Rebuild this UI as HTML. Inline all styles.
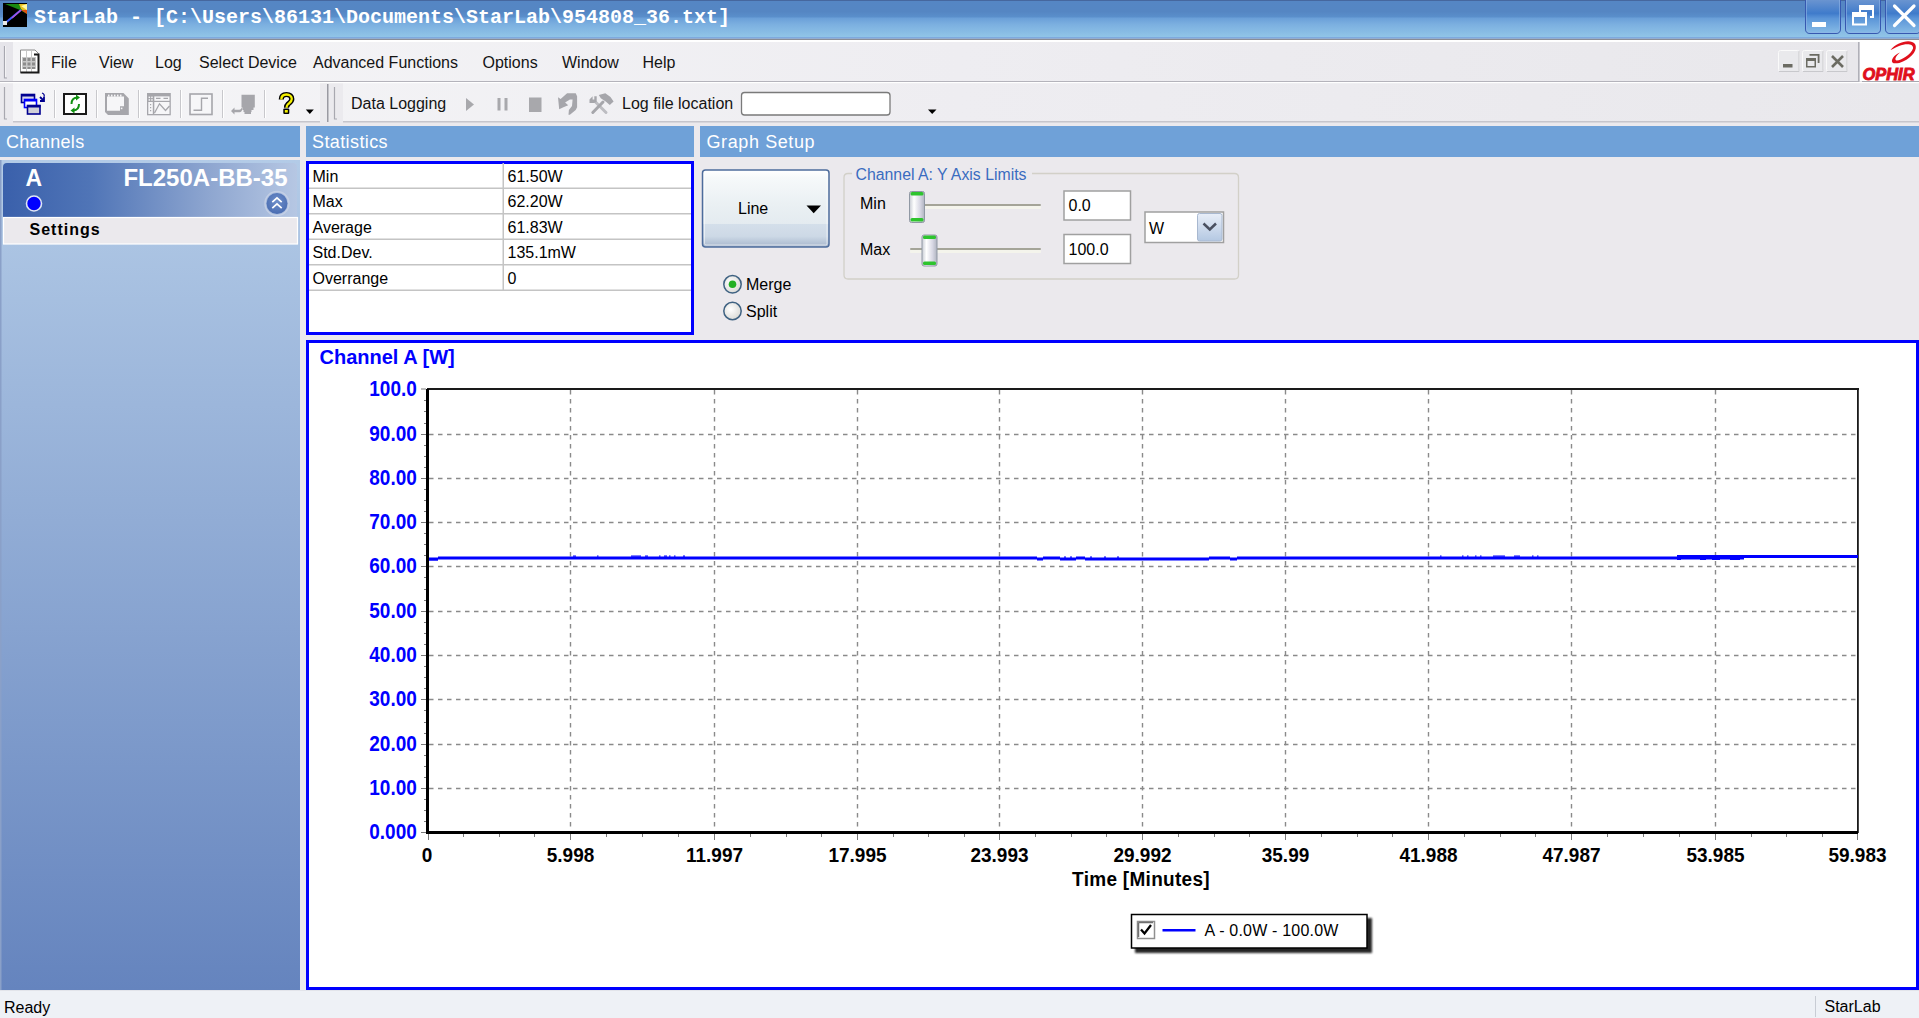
<!DOCTYPE html><html><head><meta charset="utf-8"><title>StarLab</title><style>
html,body{margin:0;padding:0;width:1919px;height:1018px;overflow:hidden;background:#ebe9ed;font-family:"Liberation Sans",sans-serif;}
svg{position:absolute;left:0;top:0;display:block;font-family:"Liberation Sans",sans-serif}
</style></head><body>
<svg width="1919" height="1018" viewBox="0 0 1919 1018">
<defs>
<linearGradient id="gTitle" x1="0" y1="0" x2="0" y2="1">
 <stop offset="0" stop-color="#5586c4"/><stop offset="0.3" stop-color="#5586c3"/><stop offset="0.45" stop-color="#5a8fcb"/>
 <stop offset="0.47" stop-color="#6a9fd8"/><stop offset="0.65" stop-color="#7cb0e0"/><stop offset="1" stop-color="#92c6e8"/>
</linearGradient>
<linearGradient id="gBtn" x1="0" y1="0" x2="0" y2="1">
 <stop offset="0" stop-color="#6a94d0"/><stop offset="0.4" stop-color="#3f7bcb"/>
 <stop offset="0.55" stop-color="#5b95d8"/><stop offset="1" stop-color="#88bce6"/>
</linearGradient>
<linearGradient id="gMenu" gradientUnits="userSpaceOnUse" x1="0" y1="0" x2="1919" y2="0">
 <stop offset="0" stop-color="#f5f5f7"/><stop offset="0.5" stop-color="#eeedf1"/><stop offset="1" stop-color="#e8e7eb"/>
</linearGradient>
<linearGradient id="gTool" gradientUnits="userSpaceOnUse" x1="0" y1="0" x2="1919" y2="0">
 <stop offset="0" stop-color="#f5f5f7"/><stop offset="0.5" stop-color="#eeedf1"/><stop offset="1" stop-color="#e9e8ec"/>
</linearGradient>
<linearGradient id="gChan" x1="0" y1="0" x2="0" y2="1">
 <stop offset="0" stop-color="#b3cbe7"/><stop offset="1" stop-color="#6584be"/>
</linearGradient>
<linearGradient id="gCard" x1="0" y1="0" x2="1" y2="0">
 <stop offset="0" stop-color="#3a60ab"/><stop offset="0.3" stop-color="#5075b7"/>
 <stop offset="0.7" stop-color="#8ea6d0"/><stop offset="1" stop-color="#b6c7e3"/>
</linearGradient>
<linearGradient id="gLineBtn" x1="0" y1="0" x2="0" y2="1">
 <stop offset="0" stop-color="#ffffff"/><stop offset="0.1" stop-color="#f6f9fa"/><stop offset="0.45" stop-color="#eaf0f3"/>
 <stop offset="0.7" stop-color="#e4ebf0"/><stop offset="0.7" stop-color="#d4dfea"/>
 <stop offset="0.86" stop-color="#cdd9e6"/><stop offset="1" stop-color="#a6b6cc"/>
</linearGradient>
<linearGradient id="gThumb" x1="0" y1="0" x2="1" y2="0">
 <stop offset="0" stop-color="#c8ccd4"/><stop offset="0.3" stop-color="#ffffff"/>
 <stop offset="0.7" stop-color="#d8d8e4"/><stop offset="1" stop-color="#b0b4c0"/>
</linearGradient>
<linearGradient id="gCombo" x1="0" y1="0" x2="0" y2="1">
 <stop offset="0" stop-color="#e8eef8"/><stop offset="1" stop-color="#b4c8e2"/>
</linearGradient>
<radialGradient id="gChev" cx="0.5" cy="0.4" r="0.6">
 <stop offset="0" stop-color="#6f8fca"/><stop offset="1" stop-color="#4a6db2"/>
</radialGradient>
<radialGradient id="gRadio" cx="0.4" cy="0.4" r="0.6">
 <stop offset="0" stop-color="#ffffff"/><stop offset="1" stop-color="#dcdcd8"/>
</radialGradient>
<filter id="fShadow" x="-10%" y="-30%" width="130%" height="180%">
 <feGaussianBlur stdDeviation="1.2"/>
</filter>
</defs>
<rect x="0" y="0" width="1919" height="1018" fill="#ebe9ed"/>
<rect x="0" y="0" width="1919" height="38" fill="url(#gTitle)"/>
<rect x="0" y="0" width="1919" height="1" fill="#46679e"/>
<rect x="0" y="37" width="1919" height="1.8" fill="#7eaadf"/>
<rect x="0" y="38.8" width="1919" height="1.4" fill="#8a8d95"/>
<rect x="0" y="40.2" width="1919" height="0.8" fill="#c4c4c8"/>
<g>
<rect x="3" y="3" width="24" height="24" fill="#000"/>
<polygon points="5,4 27,4 27,14 20,10" fill="#1a8a10"/>
<polygon points="19,4 27,4 27,13 21,9" fill="#e8c020"/>
<polygon points="21,6 27,4 27,10" fill="#fff8a0"/>
<polygon points="21,10 27,10 27,14" fill="#e05010"/>
<line x1="4" y1="24" x2="21" y2="10" stroke="#4060ff" stroke-width="2"/>
<line x1="12" y1="18" x2="21" y2="10" stroke="#b050e0" stroke-width="1.5"/>
<rect x="3" y="21" width="4" height="4" fill="#e8e8e8"/>
</g>
<text x="40" y="22.5" font-family="Liberation Mono" font-weight="bold" font-size="20" fill="#fff" text-anchor="middle">S</text>
<text x="52" y="22.5" font-family="Liberation Mono" font-weight="bold" font-size="20" fill="#fff" text-anchor="middle">t</text>
<text x="64" y="22.5" font-family="Liberation Mono" font-weight="bold" font-size="20" fill="#fff" text-anchor="middle">a</text>
<text x="76" y="22.5" font-family="Liberation Mono" font-weight="bold" font-size="20" fill="#fff" text-anchor="middle">r</text>
<text x="88" y="22.5" font-family="Liberation Mono" font-weight="bold" font-size="20" fill="#fff" text-anchor="middle">L</text>
<text x="100" y="22.5" font-family="Liberation Mono" font-weight="bold" font-size="20" fill="#fff" text-anchor="middle">a</text>
<text x="112" y="22.5" font-family="Liberation Mono" font-weight="bold" font-size="20" fill="#fff" text-anchor="middle">b</text>
<text x="136" y="22.5" font-family="Liberation Mono" font-weight="bold" font-size="20" fill="#fff" text-anchor="middle">-</text>
<text x="160" y="22.5" font-family="Liberation Mono" font-weight="bold" font-size="20" fill="#fff" text-anchor="middle">[</text>
<text x="172" y="22.5" font-family="Liberation Mono" font-weight="bold" font-size="20" fill="#fff" text-anchor="middle">C</text>
<text x="184" y="22.5" font-family="Liberation Mono" font-weight="bold" font-size="20" fill="#fff" text-anchor="middle">:</text>
<text x="196" y="22.5" font-family="Liberation Mono" font-weight="bold" font-size="20" fill="#fff" text-anchor="middle">\</text>
<text x="208" y="22.5" font-family="Liberation Mono" font-weight="bold" font-size="20" fill="#fff" text-anchor="middle">U</text>
<text x="220" y="22.5" font-family="Liberation Mono" font-weight="bold" font-size="20" fill="#fff" text-anchor="middle">s</text>
<text x="232" y="22.5" font-family="Liberation Mono" font-weight="bold" font-size="20" fill="#fff" text-anchor="middle">e</text>
<text x="244" y="22.5" font-family="Liberation Mono" font-weight="bold" font-size="20" fill="#fff" text-anchor="middle">r</text>
<text x="256" y="22.5" font-family="Liberation Mono" font-weight="bold" font-size="20" fill="#fff" text-anchor="middle">s</text>
<text x="268" y="22.5" font-family="Liberation Mono" font-weight="bold" font-size="20" fill="#fff" text-anchor="middle">\</text>
<text x="280" y="22.5" font-family="Liberation Mono" font-weight="bold" font-size="20" fill="#fff" text-anchor="middle">8</text>
<text x="292" y="22.5" font-family="Liberation Mono" font-weight="bold" font-size="20" fill="#fff" text-anchor="middle">6</text>
<text x="304" y="22.5" font-family="Liberation Mono" font-weight="bold" font-size="20" fill="#fff" text-anchor="middle">1</text>
<text x="316" y="22.5" font-family="Liberation Mono" font-weight="bold" font-size="20" fill="#fff" text-anchor="middle">3</text>
<text x="328" y="22.5" font-family="Liberation Mono" font-weight="bold" font-size="20" fill="#fff" text-anchor="middle">1</text>
<text x="340" y="22.5" font-family="Liberation Mono" font-weight="bold" font-size="20" fill="#fff" text-anchor="middle">\</text>
<text x="352" y="22.5" font-family="Liberation Mono" font-weight="bold" font-size="20" fill="#fff" text-anchor="middle">D</text>
<text x="364" y="22.5" font-family="Liberation Mono" font-weight="bold" font-size="20" fill="#fff" text-anchor="middle">o</text>
<text x="376" y="22.5" font-family="Liberation Mono" font-weight="bold" font-size="20" fill="#fff" text-anchor="middle">c</text>
<text x="388" y="22.5" font-family="Liberation Mono" font-weight="bold" font-size="20" fill="#fff" text-anchor="middle">u</text>
<text x="400" y="22.5" font-family="Liberation Mono" font-weight="bold" font-size="20" fill="#fff" text-anchor="middle">m</text>
<text x="412" y="22.5" font-family="Liberation Mono" font-weight="bold" font-size="20" fill="#fff" text-anchor="middle">e</text>
<text x="424" y="22.5" font-family="Liberation Mono" font-weight="bold" font-size="20" fill="#fff" text-anchor="middle">n</text>
<text x="436" y="22.5" font-family="Liberation Mono" font-weight="bold" font-size="20" fill="#fff" text-anchor="middle">t</text>
<text x="448" y="22.5" font-family="Liberation Mono" font-weight="bold" font-size="20" fill="#fff" text-anchor="middle">s</text>
<text x="460" y="22.5" font-family="Liberation Mono" font-weight="bold" font-size="20" fill="#fff" text-anchor="middle">\</text>
<text x="472" y="22.5" font-family="Liberation Mono" font-weight="bold" font-size="20" fill="#fff" text-anchor="middle">S</text>
<text x="484" y="22.5" font-family="Liberation Mono" font-weight="bold" font-size="20" fill="#fff" text-anchor="middle">t</text>
<text x="496" y="22.5" font-family="Liberation Mono" font-weight="bold" font-size="20" fill="#fff" text-anchor="middle">a</text>
<text x="508" y="22.5" font-family="Liberation Mono" font-weight="bold" font-size="20" fill="#fff" text-anchor="middle">r</text>
<text x="520" y="22.5" font-family="Liberation Mono" font-weight="bold" font-size="20" fill="#fff" text-anchor="middle">L</text>
<text x="532" y="22.5" font-family="Liberation Mono" font-weight="bold" font-size="20" fill="#fff" text-anchor="middle">a</text>
<text x="544" y="22.5" font-family="Liberation Mono" font-weight="bold" font-size="20" fill="#fff" text-anchor="middle">b</text>
<text x="556" y="22.5" font-family="Liberation Mono" font-weight="bold" font-size="20" fill="#fff" text-anchor="middle">\</text>
<text x="568" y="22.5" font-family="Liberation Mono" font-weight="bold" font-size="20" fill="#fff" text-anchor="middle">9</text>
<text x="580" y="22.5" font-family="Liberation Mono" font-weight="bold" font-size="20" fill="#fff" text-anchor="middle">5</text>
<text x="592" y="22.5" font-family="Liberation Mono" font-weight="bold" font-size="20" fill="#fff" text-anchor="middle">4</text>
<text x="604" y="22.5" font-family="Liberation Mono" font-weight="bold" font-size="20" fill="#fff" text-anchor="middle">8</text>
<text x="616" y="22.5" font-family="Liberation Mono" font-weight="bold" font-size="20" fill="#fff" text-anchor="middle">0</text>
<text x="628" y="22.5" font-family="Liberation Mono" font-weight="bold" font-size="20" fill="#fff" text-anchor="middle">8</text>
<text x="640" y="22.5" font-family="Liberation Mono" font-weight="bold" font-size="20" fill="#fff" text-anchor="middle">_</text>
<text x="652" y="22.5" font-family="Liberation Mono" font-weight="bold" font-size="20" fill="#fff" text-anchor="middle">3</text>
<text x="664" y="22.5" font-family="Liberation Mono" font-weight="bold" font-size="20" fill="#fff" text-anchor="middle">6</text>
<text x="676" y="22.5" font-family="Liberation Mono" font-weight="bold" font-size="20" fill="#fff" text-anchor="middle">.</text>
<text x="688" y="22.5" font-family="Liberation Mono" font-weight="bold" font-size="20" fill="#fff" text-anchor="middle">t</text>
<text x="700" y="22.5" font-family="Liberation Mono" font-weight="bold" font-size="20" fill="#fff" text-anchor="middle">x</text>
<text x="712" y="22.5" font-family="Liberation Mono" font-weight="bold" font-size="20" fill="#fff" text-anchor="middle">t</text>
<text x="724" y="22.5" font-family="Liberation Mono" font-weight="bold" font-size="20" fill="#fff" text-anchor="middle">]</text>
<path d="M1805.5,0 V29 Q1805.5,33.5 1810,33.5 H1836 Q1840.5,33.5 1840.5,29 V0" fill="url(#gBtn)" stroke="#3658b0" stroke-width="1"/>
<path d="M1806.5,0 V28.5 Q1806.5,32.5 1810,32.5 H1836 Q1839.5,32.5 1839.5,28.5 V0" fill="none" stroke="#8fb4e6" stroke-width="1" opacity="0.6"/>
<path d="M1845.5,0 V29 Q1845.5,33.5 1850,33.5 H1876 Q1880.5,33.5 1880.5,29 V0" fill="url(#gBtn)" stroke="#3658b0" stroke-width="1"/>
<path d="M1846.5,0 V28.5 Q1846.5,32.5 1850,32.5 H1876 Q1879.5,32.5 1879.5,28.5 V0" fill="none" stroke="#8fb4e6" stroke-width="1" opacity="0.6"/>
<path d="M1885.5,0 V29 Q1885.5,33.5 1890,33.5 H1916 Q1920.5,33.5 1920.5,29 V0" fill="url(#gBtn)" stroke="#3658b0" stroke-width="1"/>
<path d="M1886.5,0 V28.5 Q1886.5,32.5 1890,32.5 H1916 Q1919.5,32.5 1919.5,28.5 V0" fill="none" stroke="#8fb4e6" stroke-width="1" opacity="0.6"/>
<rect x="1812" y="22" width="14" height="5" fill="#fff"/>
<path d="M1859,5 h15 v13 h-4 v-2 h2 v-6 h-11 v2 h-2 z" fill="#fff"/>
<path d="M1852,12 h15 v13.5 h-15 z M1854,17 v6.5 h11 v-6.5 z" fill="#fff" fill-rule="evenodd"/>
<path d="M1894.5,6 L1914,25.5 M1914,6 L1894.5,25.5" stroke="#fff" stroke-width="3.2" stroke-linecap="round"/>
<rect x="0" y="40" width="1919" height="42" fill="url(#gMenu)"/>
<rect x="0" y="40" width="1919" height="2" fill="#ffffff"/>
<rect x="0" y="81" width="1859" height="1.5" fill="#b4b3bb"/>
<rect x="0" y="42" width="13" height="39" fill="#e6e5ea"/>
<path d="M4.5,46 V78 H7" stroke="#a8a8b0" fill="none" stroke-width="1.2"/>
<path d="M5.5,46 V77" stroke="#ffffff" fill="none" stroke-width="1" opacity="0.6"/>
<g>
<path d="M20.5,50 H35 L38.5,53.5 V72.5 H20.5 Z" fill="#fff" stroke="#8a8a8a" stroke-width="1"/>
<rect x="22" y="57" width="14" height="12" fill="#c8c8c8"/>
<g fill="#8c8c8c"><rect x="23" y="58" width="3" height="3"/><rect x="27.5" y="58" width="3" height="3"/><rect x="32" y="58" width="3" height="3"/>
<rect x="23" y="62.5" width="3" height="3"/><rect x="27.5" y="62.5" width="3" height="3"/><rect x="32" y="62.5" width="3" height="3"/>
<rect x="23" y="67" width="3" height="2" /><rect x="27.5" y="67" width="3" height="2"/><rect x="32" y="67" width="3" height="2"/></g>
<g fill="#c8c8c8"><rect x="26" y="51" width="1" height="21"/><rect x="31" y="51" width="1" height="21"/></g>
<path d="M20.5,72.5 H38.5 V54.5 H34" stroke="#1a1a1a" stroke-width="2" fill="none"/>
</g>
<text x="51" y="67.5" font-size="16" fill="#141414">File</text>
<text x="99" y="67.5" font-size="16" fill="#141414">View</text>
<text x="155" y="67.5" font-size="16" fill="#141414">Log</text>
<text x="199" y="67.5" font-size="16" fill="#141414">Select Device</text>
<text x="313" y="67.5" font-size="16" fill="#141414">Advanced Functions</text>
<text x="482.5" y="67.5" font-size="16" fill="#141414">Options</text>
<text x="562" y="67.5" font-size="16" fill="#141414">Window</text>
<text x="642.5" y="67.5" font-size="16" fill="#141414">Help</text>
<rect x="1778.5" y="50.5" width="21" height="21" rx="2" fill="#e9e9ec" stroke="#fafafa" stroke-width="1"/>
<path d="M1779,71.5 H1799 V51" stroke="#c8c8cc" fill="none"/>
<rect x="1802.5" y="50.5" width="21" height="21" rx="2" fill="#e9e9ec" stroke="#fafafa" stroke-width="1"/>
<path d="M1803,71.5 H1823 V51" stroke="#c8c8cc" fill="none"/>
<rect x="1826.5" y="50.5" width="21" height="21" rx="2" fill="#e9e9ec" stroke="#fafafa" stroke-width="1"/>
<path d="M1827,71.5 H1847 V51" stroke="#c8c8cc" fill="none"/>
<rect x="1783" y="64" width="9.5" height="3.5" fill="#6b6b62"/>
<path d="M1809.5,54 h10 v9 h-1.8 v-7.2 h-8.2 z" fill="#6b6b62"/>
<path d="M1806,58 h10 v9.5 h-10 z M1807.5,61 v5 h7 v-5 z" fill="#6b6b62" fill-rule="evenodd"/>
<path d="M1832,56 L1843,67 M1843,56 L1832,67" stroke="#6b6b62" stroke-width="2.6"/>
<rect x="1851" y="42" width="8" height="39" fill="#e8e7eb"/>
<rect x="1858" y="42" width="1.5" height="40" fill="#b0b0b8"/>
<rect x="1860" y="41" width="59" height="40" fill="#ffffff"/>
<rect x="1862" y="81" width="57" height="1.5" fill="#a8a8b0"/>
<text x="1862.5" y="79.5" font-size="16" font-weight="bold" font-style="italic" fill="#e0101c" stroke="#e0101c" stroke-width="0.9" textLength="52" lengthAdjust="spacingAndGlyphs">OPHIR</text>
<path d="M1890.5,50 C1896,43 1910,38 1915,44 C1918,49 1913,57 1903,61.5 C1899,63.5 1894,64 1892.5,62.5 C1890.5,60 1894,55 1900,52.5 C1896,56 1894,59.5 1896.5,60.5 C1900,61 1911,55 1913,48.5 C1914,43.5 1906,43 1899,46 C1895,47.5 1892,49.5 1890.5,50 Z" fill="#e0101c"/>
<rect x="0" y="82.5" width="1919" height="40" fill="#ebeaee"/>
<rect x="13" y="83" width="307" height="38" fill="url(#gTool)"/>
<rect x="13" y="121" width="307" height="1.5" fill="#c6c5cc"/>
<rect x="343" y="83" width="1576" height="38" fill="url(#gTool)"/>
<rect x="343" y="121" width="1576" height="1.5" fill="#c6c5cc"/>
<rect x="0" y="82" width="1919" height="1.2" fill="#ffffff"/>
<path d="M4.5,87 V119 H7" stroke="#a8a8b0" fill="none" stroke-width="1.2"/>
<rect x="327" y="84" width="1.5" height="38" fill="#9a9aa2"/>
<path d="M334.5,87 V119 H337" stroke="#a8a8b0" fill="none" stroke-width="1.2"/>
<rect x="54.0" y="90" width="1" height="28" fill="#c8c8cc"/>
<rect x="55.0" y="90" width="1" height="28" fill="#ffffff"/>
<rect x="96.0" y="90" width="1" height="28" fill="#c8c8cc"/>
<rect x="97.0" y="90" width="1" height="28" fill="#ffffff"/>
<rect x="138.0" y="90" width="1" height="28" fill="#c8c8cc"/>
<rect x="139.0" y="90" width="1" height="28" fill="#ffffff"/>
<rect x="180.0" y="90" width="1" height="28" fill="#c8c8cc"/>
<rect x="181.0" y="90" width="1" height="28" fill="#ffffff"/>
<rect x="222.0" y="90" width="1" height="28" fill="#c8c8cc"/>
<rect x="223.0" y="90" width="1" height="28" fill="#ffffff"/>
<rect x="264.0" y="90" width="1" height="28" fill="#c8c8cc"/>
<rect x="265.0" y="90" width="1" height="28" fill="#ffffff"/>
<g>
<rect x="21.5" y="94.5" width="13" height="8" fill="#d8d8e8" stroke="#000090" stroke-width="1.6"/>
<rect x="21" y="94" width="14" height="2.5" fill="#000090"/>
<rect x="24.5" y="99.5" width="12" height="8" fill="#ffffff" stroke="#0000ff" stroke-width="1.6"/>
<rect x="24" y="99" width="13" height="2.5" fill="#0000ff"/>
<rect x="27.5" y="105.5" width="12.5" height="8.5" fill="#d0d0d8" stroke="#000090" stroke-width="1.6"/>
<rect x="27" y="105" width="13.5" height="2.5" fill="#000090"/>
<path d="M40,97 L44,101 M44,97 V101 H40" stroke="#000090" stroke-width="1.8" fill="none"/>
<path d="M42,93 Q45,94 44,97" stroke="#000090" stroke-width="1.2" fill="none"/>
</g>
<g>
<rect x="64" y="94" width="22" height="20" fill="#fff" stroke="#1a1a1a" stroke-width="2"/>
<path d="M71.5,104 Q71.5,98 77,97.5" stroke="#119011" stroke-width="2" fill="none"/>
<path d="M76,94.5 L80,97.5 L76,100.5 Z" fill="#119011"/>
<path d="M79,104 Q79,110 73.5,110.5" stroke="#119011" stroke-width="2" fill="none"/>
<path d="M74.5,107.5 L70.5,110.5 L74.5,113.5 Z" fill="#119011"/>
</g>
<g>
<path d="M105,93 H123.5 L128.8,98.5 V115 H108 L105,112 Z" fill="#a6a6ab"/>
<path d="M107,96.5 H124 V106.3 H120 V110.7 H107 Z" fill="#f6f6f8"/>
<rect x="120.8" y="107.6" width="1.6" height="1.6" fill="#f6f6f8"/>
<g fill="#f6f6f8"><rect x="108" y="94.6" width="1.5" height="2"/><rect x="111" y="94.6" width="1.5" height="2"/><rect x="114" y="94.6" width="1.5" height="2"/><rect x="117" y="94.6" width="1.5" height="2"/><rect x="120" y="94.6" width="1.5" height="2"/></g>
</g>
<g>
<rect x="147" y="93" width="23.8" height="22.3" fill="#a6a6ab"/>
<rect x="148.3" y="96" width="4.5" height="4.6" fill="#a6a6ab"/>
<rect x="154.3" y="96.4" width="15.2" height="4.4" fill="#f6f6f8"/>
<rect x="148.3" y="102" width="4.5" height="12" fill="#f6f6f8"/>
<rect x="154.3" y="102" width="15.2" height="12" fill="#f6f6f8"/>
<g fill="#f6f6f8"><rect x="148.6" y="96.6" width="1.5" height="1.5"/><rect x="151.2" y="96.6" width="1.5" height="1.5"/><rect x="148.6" y="99.2" width="1.5" height="1.5"/><rect x="151.2" y="99.2" width="1.5" height="1.5"/></g>
<path d="M156,98.3 h4.5 M163.5,98.3 h4.5" stroke="#a6a6ab" stroke-width="1.3"/>
<path d="M150.6,104v1.3 M150.6,107v1.3 M150.6,110v1.3" stroke="#a6a6ab" stroke-width="1.2"/>
<path d="M154.5,113 L159.5,103.8 L165.5,110.5 L169.5,106" stroke="#a6a6ab" stroke-width="1.3" fill="none"/>
</g>
<g>
<rect x="190" y="94" width="22" height="20.5" fill="#f6f6f8" stroke="#a6a6ab" stroke-width="1.6"/>
<path d="M193.5,110.3 H201.5 V98.2 H208" stroke="#a6a6ab" stroke-width="1.4" fill="none"/>
</g>
<g fill="#a6a6ab">
<path d="M241.5,94.7 H254.8 V107.6 H253.5 V110 H251.5 V112 H251 V114 H244.5 V112 H243.5 V110 H242.5 V107.6 H241.5 Z"/>
<path d="M231,111 L234.5,107.5 V109.8 H239.5 Q241,109.8 241.5,108 L242.5,108.5 Q242,112 239.5,112.2 H234.5 V114.5 Z"/>
</g>
<path d="M281.3,99.5 C281.3,96 283.5,94.5 286.5,94.5 C289.8,94.5 291.8,96.5 291.8,99 C291.8,101.5 289.8,102.6 288.2,104 C286.7,105.4 286.5,106 286.5,107.8" stroke="#000" stroke-width="5.2" fill="none"/>
<rect x="283.3" y="108.6" width="6" height="5.4" rx="1" fill="#000"/>
<path d="M281.3,99.5 C281.3,96 283.5,94.5 286.5,94.5 C289.8,94.5 291.8,96.5 291.8,99 C291.8,101.5 289.8,102.6 288.2,104 C286.7,105.4 286.5,106 286.5,107.8" stroke="#f4f000" stroke-width="2.3" fill="none"/>
<rect x="284.8" y="110" width="3" height="2.6" fill="#f4f000"/>
<path d="M305.8,109.5 H313.8 L309.8,114 Z" fill="#000"/>
<text x="351" y="108.7" font-size="16" fill="#141414">Data Logging</text>
<path d="M466,98 L474,104.5 L466,111 Z" fill="#a8a8ac"/>
<rect x="497.5" y="98" width="3" height="12.5" fill="#a8a8ac"/><rect x="504.5" y="98" width="3" height="12.5" fill="#a8a8ac"/>
<rect x="529" y="97.5" width="12.5" height="14.5" fill="#a8a8ac"/>
<path d="M567.1,93.2 L575.7,93.2 L577.1,96.3 L577.1,107.3 L575.7,110 L569.9,114.8 L568.5,114.8 L568.9,110 L572,105.9 L572.6,99.4 L569.9,99.4 L565.1,102.4 L568.2,105.2 L563.4,107.3 L559.2,109.3 L558,97.3 L560.6,99 Z" fill="#a6a6ab"/>
<path d="M596,102.5 L606,112.5" stroke="#bdbdc2" stroke-width="3" stroke-linecap="round"/>
<path d="M589.5,99.4 L592.6,96.3 L596.7,96.3 L596.7,101.8 L594.3,103.1 L589.5,103.1 Z M592.6,99.4 L592.6,96.3 L594.3,96.3 L594.3,99.4 Z" fill="#a6a6ab" fill-rule="evenodd"/>
<path d="M592.8,112.5 L603,102" stroke="#a6a6ab" stroke-width="3" stroke-linecap="round"/>
<path d="M598.8,94.9 L605.3,93.2 L610.5,96.9 L613.6,101.4 L609.8,104.9 L605.7,101.4 L600.8,98.3 Z" fill="#a6a6ab"/>
<text x="622" y="108.7" font-size="16" fill="#141414">Log file location</text>
<rect x="741.5" y="92.5" width="148.5" height="22.5" rx="3" fill="#ffffff" stroke="#7a7a7a" stroke-width="1.3"/>
<path d="M928,109.5 H936.5 L932.2,114 Z" fill="#000"/>
<rect x="0" y="126" width="300" height="31" fill="#6fa1d8"/>
<rect x="306" y="126" width="388" height="31" fill="#6fa1d8"/>
<rect x="700" y="126" width="1219" height="31" fill="#6fa1d8"/>
<text x="6" y="148.4" font-size="18" fill="#ffffff" letter-spacing="0.3">Channels</text>
<text x="312" y="148.4" font-size="18" fill="#ffffff" letter-spacing="0.4">Statistics</text>
<text x="706.5" y="148.4" font-size="18" fill="#ffffff" letter-spacing="0.6">Graph Setup</text>
<rect x="0" y="160" width="300" height="830" fill="url(#gChan)"/>
<rect x="0" y="160" width="1.5" height="830" fill="#8aa0c8"/>
<path d="M3,217 V167 Q3,163 7,163 H293 Q297,163 297,167 V217 Z" fill="url(#gCard)"/>
<text x="25.5" y="186" font-size="23" font-weight="bold" fill="#ffffff">A</text>
<text x="287.5" y="186" font-size="24" font-weight="bold" fill="#ffffff" text-anchor="end">FL250A-BB-35</text>
<circle cx="34" cy="203.5" r="7.5" fill="#0000ff" stroke="#dfe6f4" stroke-width="1.6"/>
<circle cx="277" cy="203.5" r="12" fill="none" stroke="#c8d2e6" stroke-width="1.5" opacity="0.8"/>
<circle cx="277" cy="203.5" r="10.5" fill="url(#gChev)"/>
<path d="M272.3,202.2 L277,197.8 L281.7,202.2 M272.3,208.2 L277,203.8 L281.7,208.2" stroke="#fff" stroke-width="1.7" fill="none"/>
<rect x="3.5" y="217.5" width="294" height="26.5" fill="#ebe9ed" stroke="#ffffff" stroke-width="1.2"/>
<text x="29.5" y="235" font-size="16" font-weight="bold" fill="#000" letter-spacing="1">Settings</text>
<rect x="307.5" y="162.5" width="385" height="171" fill="#ffffff" stroke="#0000ff" stroke-width="3"/>
<rect x="309" y="187.5" width="382" height="1.5" fill="#c4c4c4"/>
<rect x="309" y="213.0" width="382" height="1.5" fill="#c4c4c4"/>
<rect x="309" y="238.5" width="382" height="1.5" fill="#c4c4c4"/>
<rect x="309" y="264.0" width="382" height="1.5" fill="#c4c4c4"/>
<rect x="309" y="289.5" width="382" height="1.5" fill="#c4c4c4"/>
<rect x="502.5" y="163" width="1.5" height="127.5" fill="#c4c4c4"/>
<text x="312.5" y="181.5" font-size="16" fill="#000">Min</text>
<text x="507.5" y="181.5" font-size="16" fill="#000">61.50W</text>
<text x="312.5" y="207.0" font-size="16" fill="#000">Max</text>
<text x="507.5" y="207.0" font-size="16" fill="#000">62.20W</text>
<text x="312.5" y="232.5" font-size="16" fill="#000">Average</text>
<text x="507.5" y="232.5" font-size="16" fill="#000">61.83W</text>
<text x="312.5" y="258.0" font-size="16" fill="#000">Std.Dev.</text>
<text x="507.5" y="258.0" font-size="16" fill="#000">135.1mW</text>
<text x="312.5" y="283.5" font-size="16" fill="#000">Overrange</text>
<text x="507.5" y="283.5" font-size="16" fill="#000">0</text>
<rect x="702.5" y="170" width="126.5" height="77" rx="3" fill="url(#gLineBtn)" stroke="#4d6c9c" stroke-width="1.5"/>
<rect x="704.5" y="172" width="122.5" height="73" rx="1.5" fill="none" stroke="#ffffff" stroke-width="1" opacity="0.55"/>
<text x="738" y="214.3" font-size="16" fill="#000">Line</text>
<path d="M806.5,205.5 H821 L813.7,213.2 Z" fill="#000"/>
<circle cx="732.5" cy="284.3" r="8.7" fill="url(#gRadio)" stroke="#3f6282" stroke-width="1.5"/>
<circle cx="732.5" cy="284.3" r="3.8" fill="#22b022"/>
<text x="746" y="290" font-size="16" fill="#000">Merge</text>
<circle cx="732.5" cy="311" r="8.7" fill="url(#gRadio)" stroke="#3f6282" stroke-width="1.5"/>
<text x="746" y="317" font-size="16" fill="#000">Split</text>
<path d="M852,173.5 H848 Q844,173.5 844,177.5 V275 Q844,279 848,279 H1234.5 Q1238.5,279 1238.5,275 V177.5 Q1238.5,173.5 1234.5,173.5 H1032" fill="none" stroke="#d2d0c8" stroke-width="1.3"/>
<text x="855.5" y="179.6" font-size="16" fill="#3a6cc0" textLength="171" lengthAdjust="spacingAndGlyphs">Channel A: Y Axis Limits</text>
<text x="860" y="208.5" font-size="16" fill="#000">Min</text>
<text x="860" y="254.5" font-size="16" fill="#000">Max</text>
<rect x="910" y="204" width="131" height="2" rx="1" fill="#a4a498"/>
<rect x="910" y="206" width="131" height="3" rx="1" fill="#f4f4ec"/>
<rect x="910" y="248" width="131" height="2" rx="1" fill="#a4a498"/>
<rect x="910" y="250" width="131" height="3" rx="1" fill="#f4f4ec"/>
<rect x="909.5" y="191.5" width="15" height="31" rx="2" fill="url(#gThumb)" stroke="#9098a4" stroke-width="1"/>
<rect x="910.5" y="192.0" width="13" height="3.5" rx="1.5" fill="#2ec42e"/>
<rect x="910.5" y="218.0" width="13" height="3.5" rx="1.5" fill="#2ec42e"/>
<rect x="922" y="235" width="15" height="31" rx="2" fill="url(#gThumb)" stroke="#9098a4" stroke-width="1"/>
<rect x="923" y="235.5" width="13" height="3.5" rx="1.5" fill="#2ec42e"/>
<rect x="923" y="261.5" width="13" height="3.5" rx="1.5" fill="#2ec42e"/>
<rect x="1064" y="191" width="66.5" height="29" fill="#fff" stroke="#a0a0a0" stroke-width="1.5"/>
<rect x="1064" y="234.5" width="66.5" height="29" fill="#fff" stroke="#a0a0a0" stroke-width="1.5"/>
<text x="1068.5" y="211" font-size="16" fill="#000">0.0</text>
<text x="1068.5" y="255.2" font-size="16" fill="#000">100.0</text>
<rect x="1145" y="212" width="78.5" height="30.5" fill="#fff" stroke="#a0a0a0" stroke-width="1.5"/>
<rect x="1197.5" y="213.5" width="24.5" height="27.5" rx="2" fill="url(#gCombo)" stroke="#a8b8d0" stroke-width="1"/>
<path d="M1203.5,223.5 L1209.8,229.5 L1216,223.5" stroke="#4a5060" stroke-width="2.5" fill="none"/>
<text x="1149" y="233.7" font-size="16" fill="#000">W</text>
<rect x="307.5" y="341.5" width="1610" height="647" fill="#ffffff" stroke="#0000ff" stroke-width="3"/>
<text x="319.5" y="364.4" font-size="20" font-weight="bold" fill="#0000ff">Channel A [W]</text>
<path d="M429,788.5 H1857 M429,744.5 H1857 M429,699.5 H1857 M429,655.5 H1857 M429,611.5 H1857 M429,566.5 H1857 M429,522.5 H1857 M429,478.5 H1857 M429,434.5 H1857 M570.5,390 V831 M714.5,390 V831 M857.5,390 V831 M999.5,390 V831 M1142.5,390 V831 M1285.5,390 V831 M1428.5,390 V831 M1571.5,390 V831 M1715.5,390 V831" stroke="#8a8a8a" stroke-width="1.4" stroke-dasharray="4.5 4.5" fill="none"/>
<path d="M421,832.5 H426 M424,821.5 H426 M424,810.5 H426 M424,799.5 H426 M421,788.5 H426 M424,777.5 H426 M424,766.5 H426 M424,755.5 H426 M421,744.5 H426 M424,733.5 H426 M424,722.5 H426 M424,710.5 H426 M421,699.5 H426 M424,688.5 H426 M424,677.5 H426 M424,666.5 H426 M421,655.5 H426 M424,644.5 H426 M424,633.5 H426 M424,622.5 H426 M421,611.5 H426 M424,600.5 H426 M424,589.5 H426 M424,577.5 H426 M421,566.5 H426 M424,555.5 H426 M424,544.5 H426 M424,533.5 H426 M421,522.5 H426 M424,511.5 H426 M424,500.5 H426 M424,489.5 H426 M421,478.5 H426 M424,467.5 H426 M424,456.5 H426 M424,445.5 H426 M421,434.5 H426 M424,423.5 H426 M424,411.5 H426 M424,400.5 H426 M421,389 H426 M428.5,834 V840 M463.5,834 V837 M499.5,834 V837 M534.5,834 V837 M570.5,834 V840 M606.5,834 V837 M642.5,834 V837 M678.5,834 V837 M714.5,834 V840 M750.5,834 V837 M786.5,834 V837 M821.5,834 V837 M857.5,834 V840 M893.5,834 V837 M928.5,834 V837 M964.5,834 V837 M999.5,834 V840 M1035.5,834 V837 M1071.5,834 V837 M1106.5,834 V837 M1142.5,834 V840 M1178.5,834 V837 M1214.5,834 V837 M1249.5,834 V837 M1285.5,834 V840 M1321.5,834 V837 M1357.5,834 V837 M1392.5,834 V837 M1428.5,834 V840 M1464.5,834 V837 M1500.5,834 V837 M1535.5,834 V837 M1571.5,834 V840 M1607.5,834 V837 M1643.5,834 V837 M1679.5,834 V837 M1715.5,834 V840 M1751.5,834 V837 M1786.5,834 V837 M1822.5,834 V837 M1857.5,834 V840" stroke="#7a7a7a" stroke-width="1" fill="none"/>
<rect x="427" y="388" width="1432" height="2" fill="#1a1a1a"/>
<rect x="1857" y="388" width="1.8" height="445" fill="#1a1a1a"/>
<rect x="426" y="389" width="3" height="445" fill="#000"/>
<rect x="426" y="831" width="1432" height="3" fill="#000"/>
<rect x="429" y="557.5" width="9" height="3" fill="#0000ff"/>
<rect x="438" y="556.5" width="599" height="3" fill="#0000ff"/>
<rect x="1037" y="557.5" width="6" height="3" fill="#0000ff"/>
<rect x="1043" y="556.5" width="17" height="3" fill="#0000ff"/>
<rect x="1060" y="557.5" width="16" height="3" fill="#0000ff"/>
<rect x="1076" y="556.5" width="9" height="3" fill="#0000ff"/>
<rect x="1085" y="557.5" width="124" height="3" fill="#0000ff"/>
<rect x="1209" y="556.5" width="21" height="3" fill="#0000ff"/>
<rect x="1230" y="557.5" width="7" height="3" fill="#0000ff"/>
<rect x="1237" y="556.5" width="20" height="3" fill="#0000ff"/>
<rect x="1257" y="556.5" width="420" height="3" fill="#0000ff"/>
<rect x="1744" y="555.0" width="114" height="3" fill="#0000ff"/>
<rect x="1677" y="555" width="67" height="4.5" fill="#0000ff"/>
<rect x="429" y="559" width="9" height="1.5" fill="#0000ff"/>
<rect x="573" y="555.5" width="3" height="1.2" fill="#0000ff"/>
<rect x="597" y="555.5" width="1.5" height="1.2" fill="#0000ff"/>
<rect x="631" y="555.5" width="10" height="1.2" fill="#0000ff"/>
<rect x="645" y="555.5" width="3" height="1.2" fill="#0000ff"/>
<rect x="659" y="555.5" width="1.5" height="1.2" fill="#0000ff"/>
<rect x="664" y="555.5" width="3" height="1.2" fill="#0000ff"/>
<rect x="669" y="555.5" width="1.5" height="1.2" fill="#0000ff"/>
<rect x="674" y="555.5" width="1.5" height="1.2" fill="#0000ff"/>
<rect x="683" y="555.5" width="2" height="1.2" fill="#0000ff"/>
<rect x="1064" y="556.5" width="2" height="1.2" fill="#0000ff"/>
<rect x="1070" y="556.5" width="2" height="1.2" fill="#0000ff"/>
<rect x="1090" y="556.5" width="2" height="1.2" fill="#0000ff"/>
<rect x="1104" y="556.5" width="2" height="1.2" fill="#0000ff"/>
<rect x="1117" y="556.5" width="2" height="1.2" fill="#0000ff"/>
<rect x="1440" y="555.5" width="1.5" height="1.2" fill="#0000ff"/>
<rect x="1462" y="555.5" width="1.5" height="1.2" fill="#0000ff"/>
<rect x="1467" y="555.5" width="1.5" height="1.2" fill="#0000ff"/>
<rect x="1475" y="555.5" width="1.5" height="1.2" fill="#0000ff"/>
<rect x="1480" y="555.5" width="1.5" height="1.2" fill="#0000ff"/>
<rect x="1493" y="555.5" width="12" height="1.2" fill="#0000ff"/>
<rect x="1514" y="555.5" width="6" height="1.2" fill="#0000ff"/>
<rect x="1532" y="555.5" width="1.5" height="1.2" fill="#0000ff"/>
<rect x="1537" y="555.5" width="1.5" height="1.2" fill="#0000ff"/>
<rect x="1677" y="559" width="4" height="1" fill="#0000ff"/>
<rect x="1700" y="559" width="6" height="1" fill="#0000ff"/>
<rect x="1712" y="559" width="8" height="1" fill="#0000ff"/>
<rect x="1730" y="559" width="10" height="1" fill="#0000ff"/>
<text transform="translate(416.8,839.3) scale(1,1.15)" font-size="19" font-weight="bold" fill="#0000ff" text-anchor="end">0.000</text>
<text transform="translate(416.8,795.3) scale(1,1.15)" font-size="19" font-weight="bold" fill="#0000ff" text-anchor="end">10.00</text>
<text transform="translate(416.8,751.3) scale(1,1.15)" font-size="19" font-weight="bold" fill="#0000ff" text-anchor="end">20.00</text>
<text transform="translate(416.8,706.3) scale(1,1.15)" font-size="19" font-weight="bold" fill="#0000ff" text-anchor="end">30.00</text>
<text transform="translate(416.8,662.3) scale(1,1.15)" font-size="19" font-weight="bold" fill="#0000ff" text-anchor="end">40.00</text>
<text transform="translate(416.8,618.3) scale(1,1.15)" font-size="19" font-weight="bold" fill="#0000ff" text-anchor="end">50.00</text>
<text transform="translate(416.8,573.3) scale(1,1.15)" font-size="19" font-weight="bold" fill="#0000ff" text-anchor="end">60.00</text>
<text transform="translate(416.8,529.3) scale(1,1.15)" font-size="19" font-weight="bold" fill="#0000ff" text-anchor="end">70.00</text>
<text transform="translate(416.8,485.3) scale(1,1.15)" font-size="19" font-weight="bold" fill="#0000ff" text-anchor="end">80.00</text>
<text transform="translate(416.8,441.3) scale(1,1.15)" font-size="19" font-weight="bold" fill="#0000ff" text-anchor="end">90.00</text>
<text transform="translate(416.8,396.3) scale(1,1.15)" font-size="19" font-weight="bold" fill="#0000ff" text-anchor="end">100.0</text>
<text transform="translate(427.0,862) scale(1,1.1)" font-size="19" font-weight="bold" fill="#000" text-anchor="middle">0</text>
<text transform="translate(570.5,862) scale(1,1.1)" font-size="19" font-weight="bold" fill="#000" text-anchor="middle">5.998</text>
<text transform="translate(714.5,862) scale(1,1.1)" font-size="19" font-weight="bold" fill="#000" text-anchor="middle">11.997</text>
<text transform="translate(857.5,862) scale(1,1.1)" font-size="19" font-weight="bold" fill="#000" text-anchor="middle">17.995</text>
<text transform="translate(999.5,862) scale(1,1.1)" font-size="19" font-weight="bold" fill="#000" text-anchor="middle">23.993</text>
<text transform="translate(1142.5,862) scale(1,1.1)" font-size="19" font-weight="bold" fill="#000" text-anchor="middle">29.992</text>
<text transform="translate(1285.5,862) scale(1,1.1)" font-size="19" font-weight="bold" fill="#000" text-anchor="middle">35.99</text>
<text transform="translate(1428.5,862) scale(1,1.1)" font-size="19" font-weight="bold" fill="#000" text-anchor="middle">41.988</text>
<text transform="translate(1571.5,862) scale(1,1.1)" font-size="19" font-weight="bold" fill="#000" text-anchor="middle">47.987</text>
<text transform="translate(1715.5,862) scale(1,1.1)" font-size="19" font-weight="bold" fill="#000" text-anchor="middle">53.985</text>
<text transform="translate(1857.5,862) scale(1,1.1)" font-size="19" font-weight="bold" fill="#000" text-anchor="middle">59.983</text>
<text transform="translate(1141,885.8) scale(1,1.08)" font-size="19" font-weight="bold" fill="#000" text-anchor="middle" letter-spacing="0.3">Time [Minutes]</text>
<rect x="1135" y="918" width="237" height="35" fill="#000" filter="url(#fShadow)" opacity="0.85"/>
<rect x="1131.5" y="914.5" width="235.5" height="33.5" fill="#fff" stroke="#000" stroke-width="1.5"/>
<rect x="1137.5" y="921.5" width="17" height="17" fill="#fff" stroke="#909090" stroke-width="1.5"/>
<path d="M1138.5,922.5 H1153 M1138.5,922.5 V937" stroke="#707070" stroke-width="1.5"/>
<path d="M1141,929.5 L1144.5,933.5 L1151,925" stroke="#000" stroke-width="2.3" fill="none"/>
<rect x="1162.5" y="929" width="33" height="2.5" fill="#0000ff"/>
<text x="1204.5" y="935.8" font-size="16" fill="#000" letter-spacing="0.2">A - 0.0W - 100.0W</text>
<rect x="0" y="990" width="1919" height="28" fill="#eef1f6"/>
<rect x="0" y="990" width="1919" height="1" fill="#e2e4ea"/>
<text x="4" y="1012.5" font-size="16" fill="#000">Ready</text>
<rect x="1815" y="996" width="1" height="21" fill="#c8ccd4"/>
<text x="1824.5" y="1012.2" font-size="16" fill="#000">StarLab</text>
</svg></body></html>
